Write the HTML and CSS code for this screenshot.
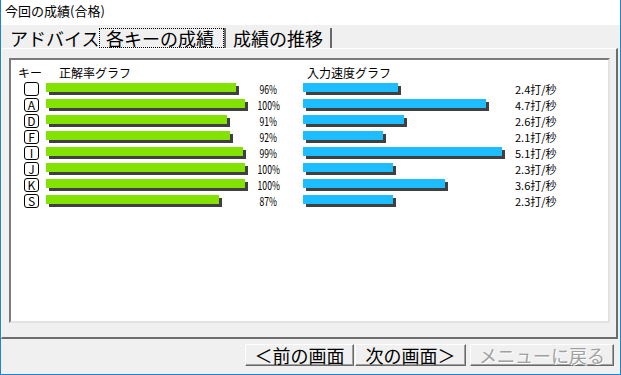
FILE: index.html
```html
<!DOCTYPE html>
<html lang="ja">
<head>
  <meta charset="UTF-8" />
  <title>今回の成績(合格)</title>
  <link rel="stylesheet" href="styles.css">
</head>
<body>
  <div class="window">
    <div class="titlebar">今回の成績(合格)</div>

    <div class="tabs">
      <div class="tab first">アドバイス</div>
      <div class="tab active"><span class="focus">各キーの成績</span></div>
      <div class="tab last">成績の推移</div>
    </div>

    <div class="page">
      <div class="panel">
        <div class="head">
          <span class="h-key">キー</span>
          <span class="h-acc">正解率グラフ</span>
          <span class="h-speed">入力速度グラフ</span>
        </div>

        <div class="row">
          <span class="key"></span>
          <div class="acc"><div class="bar green" style="width:190px"></div></div>
          <span class="pct">96%</span>
          <div class="spd"><div class="bar blue" style="width:95px"></div></div>
          <span class="rate">2.4打/秒</span>
        </div>
        <div class="row">
          <span class="key">A</span>
          <div class="acc"><div class="bar green" style="width:199px"></div></div>
          <span class="pct">100%</span>
          <div class="spd"><div class="bar blue" style="width:183px"></div></div>
          <span class="rate">4.7打/秒</span>
        </div>
        <div class="row">
          <span class="key">D</span>
          <div class="acc"><div class="bar green" style="width:181px"></div></div>
          <span class="pct">91%</span>
          <div class="spd"><div class="bar blue" style="width:101px"></div></div>
          <span class="rate">2.6打/秒</span>
        </div>
        <div class="row">
          <span class="key">F</span>
          <div class="acc"><div class="bar green" style="width:184px"></div></div>
          <span class="pct">92%</span>
          <div class="spd"><div class="bar blue" style="width:80px"></div></div>
          <span class="rate">2.1打/秒</span>
        </div>
        <div class="row">
          <span class="key">I</span>
          <div class="acc"><div class="bar green" style="width:197px"></div></div>
          <span class="pct">99%</span>
          <div class="spd"><div class="bar blue" style="width:199px"></div></div>
          <span class="rate">5.1打/秒</span>
        </div>
        <div class="row">
          <span class="key">J</span>
          <div class="acc"><div class="bar green" style="width:199px"></div></div>
          <span class="pct">100%</span>
          <div class="spd"><div class="bar blue" style="width:90px"></div></div>
          <span class="rate">2.3打/秒</span>
        </div>
        <div class="row">
          <span class="key">K</span>
          <div class="acc"><div class="bar green" style="width:199px"></div></div>
          <span class="pct">100%</span>
          <div class="spd"><div class="bar blue" style="width:142px"></div></div>
          <span class="rate">3.6打/秒</span>
        </div>
        <div class="row">
          <span class="key">S</span>
          <div class="acc"><div class="bar green" style="width:173px"></div></div>
          <span class="pct">87%</span>
          <div class="spd"><div class="bar blue" style="width:90px"></div></div>
          <span class="rate">2.3打/秒</span>
        </div>
      </div>
    </div>

    <div class="buttons">
      <button class="btn prev">＜前の画面</button>
      <button class="btn next">次の画面＞</button>
      <button class="btn menu" disabled>メニューに戻る</button>
    </div>
  </div>
</body>
</html>
```

FILE: styles.css
```css
body {
  margin: 0;
  font-family: "Noto Sans CJK JP", sans-serif;
  color: #000;
}
.window {
  width: 621px;
  height: 375px;
  box-sizing: border-box;
  border: 1px solid #1a84d8;
  border-top: none;
  background: #f0f0f0;
  display: flex;
  flex-direction: column;
}
.titlebar {
  flex: none;
  height: 25px;
  background: #fff;
  font-size: 13px;
  line-height: 22px;
  padding-left: 4px;
}

/* tabs */
.tabs {
  flex: none;
  display: flex;
  height: 20px;
  margin-top: 3px;
  padding-left: 2px;
}
.tab {
  box-sizing: border-box;
  height: 20px;
  font-size: 18px;
  line-height: 20px;
  white-space: nowrap;
}
.tab.first { width: 95px; padding-left: 7px; }
.tab.active {
  width: 128px;
  border-left: 1px solid #fff;
  border-right: 2px solid #696969;
}
.focus {
  display: block;
  height: 20px;
  box-sizing: border-box;
  border: 1px dotted #000;
  padding-left: 6px;
  line-height: 18px;
}
.tab.last {
  width: 106px;
  padding-left: 7px;
  border-right: 2px solid #696969;
}

/* tab page */
.page {
  flex: none;
  height: 291px;
  margin-right: 2px;
  box-sizing: border-box;
  border-top: 1px solid #fff;
  border-left: 1px solid #fff;
  border-right: 2px solid #6d6d6d;
  border-bottom: 2px solid #6d6d6d;
  padding: 9px 6px 14px 7px;
  display: flex;
}
.panel {
  flex: 1;
  background: #fff;
  border-top: 2px solid #7a7a7a;
  border-left: 2px solid #7a7a7a;
  border-right: 2px solid #e3e3e3;
  border-bottom: 2px solid #e3e3e3;
  padding: 6px 0 0 7px;
  font-size: 12px;
}
.head {
  display: flex;
  height: 14px;
  line-height: 14px;
  margin-bottom: 1px;
  white-space: nowrap;
}
.h-key { width: 41px; }
.h-acc { width: 248px; }

.row {
  display: flex;
  align-items: flex-start;
  height: 16px;
}
.key {
  box-sizing: border-box;
  width: 15px;
  height: 14px;
  margin: 1px 0 0 6px;
  border: 1px solid #000;
  border-radius: 3px;
  font-size: 12px;
  line-height: 12px;
  text-align: center;
}
.acc {
  width: 204px;
  margin-left: 7px;
  padding-top: 2px;
}
.spd {
  width: 212px;
  margin-left: 26px;
  padding-top: 2px;
}
.bar {
  height: 9px;
  box-shadow: 3px 3px 0 #404040;
}
.green { background: #84e200; }
.blue { background: #1ebdff; }
.pct {
  width: 27px;
  text-align: right;
  font-size: 12px;
  line-height: 16px;
  transform: scaleX(0.72);
  transform-origin: right center;
}
.rate {
  font-size: 11px;
  line-height: 16px;
  white-space: nowrap;
}

/* bottom buttons */
.buttons {
  flex: 1;
  display: flex;
  justify-content: flex-end;
  align-items: flex-start;
  padding: 5px 6px 0 0;
}
.btn {
  height: 22px;
  box-sizing: border-box;
  padding: 0;
  background: #f0f0f0;
  border: 1px solid;
  border-color: #fff #696969 #696969 #fff;
  box-shadow: inset -1px -1px 0 #a0a0a0;
  font-family: inherit;
  font-size: 18px;
  line-height: 18px;
  color: #000;
  white-space: nowrap;
}
.prev { width: 109px; margin-right: 1px; }
.next { width: 111px; margin-right: 4px; }
.menu {
  width: 144px;
  color: #a0a0a0;
  text-shadow: 1px 1px 0 #fff;
}
```
